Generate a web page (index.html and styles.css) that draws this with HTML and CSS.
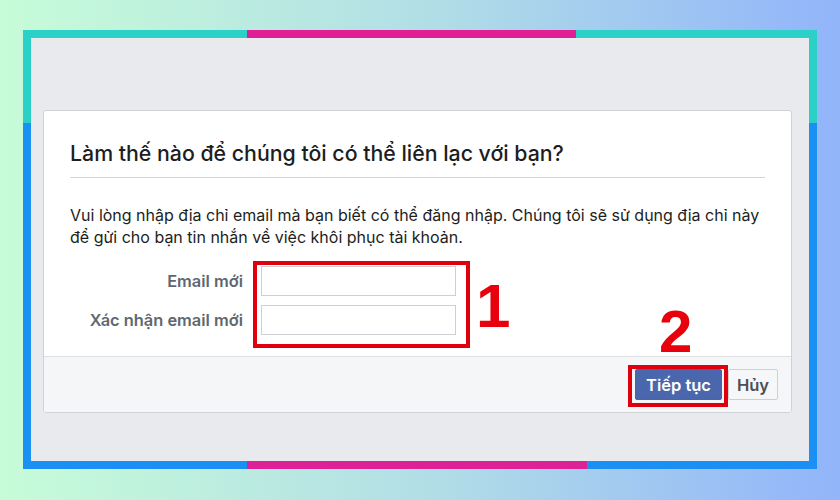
FILE: index.html
```html
<!DOCTYPE html>
<html lang="vi">
<head>
    <meta charset="UTF-8">
    <meta name="viewport" content="width=device-width, initial-scale=1.0">
    <title>Liên hệ email mới</title>
    <link rel="stylesheet" href="styles.css">
</head>
<body>
    <div class="frame">
        <div class="panel">
            <!-- Dialog card -->
            <div class="card">
                <div class="card-body">
                    <h2 class="card-title">Làm thế nào để chúng tôi có thể liên lạc với bạn?</h2>
                    <p class="card-text">Vui lòng nhập địa chỉ email mà bạn biết có thể đăng nhập. Chúng tôi sẽ sử dụng địa chỉ này để gửi cho bạn tin nhắn về việc khôi phục tài khoản.</p>

                    <div class="form">
                        <div class="form-row">
                            <label for="newEmail">Email mới</label>
                            <input type="text" id="newEmail">
                        </div>
                        <div class="form-row">
                            <label for="confirmEmail">Xác nhận email mới</label>
                            <input type="text" id="confirmEmail">
                        </div>
                    </div>
                </div>

                <div class="card-footer">
                    <button class="btn btn-primary">Tiếp tục</button>
                    <button class="btn btn-cancel">Hủy</button>
                </div>
            </div>

            <!-- Annotations -->
            <div class="mark mark-inputs"></div>
            <div class="mark mark-button"></div>
            <span class="step step-1">1</span>
            <span class="step step-2">2</span>
        </div>
    </div>
</body>
</html>
```

FILE: styles.css
```css
/* Base */
* {
    margin: 0;
    padding: 0;
    box-sizing: border-box;
}
body {
    width: 840px;
    height: 500px;
    padding-top: 30px;
    overflow: hidden;
    font-family: Inter, "Liberation Sans", Arial, sans-serif;
    background: linear-gradient(to right, #c7fcd8, #b2dfe6 50%, #92b4fa);
}

/* Coloured frame */
.frame {
    margin-left: 23px;
    width: 794px;
    height: 439px;
    padding: 8px;
    background:
        linear-gradient(to right, #2bd0c6 224px, #e01e96 224px, #e01e96 553px, #2bd0c6 553px) top / 100% 8px no-repeat,
        linear-gradient(to right, #1a90f5 224px, #dd2298 224px, #dd2298 564px, #1a90f5 564px) bottom / 100% 8px no-repeat,
        linear-gradient(to bottom, #2bd0c6 93px, #1a90f5 93px) left / 8px 100% no-repeat,
        linear-gradient(to bottom, #2bd0c6 93px, #1a90f5 93px) right / 8px 100% no-repeat;
}
.panel {
    position: relative;
    height: 100%;
    padding: 72px 17px 0 12px;
    background-color: #e9eaee;
}

/* Card */
.card {
    height: 303px;
    display: flex;
    flex-direction: column;
    background-color: #fff;
    border: 1px solid #cfd2d7;
    border-radius: 3px;
    overflow: hidden;
}
.card-body {
    flex: 1;
    padding: 30px 26px 0;
}
.card-title {
    font-size: 21.3px;
    line-height: 24px;
    font-weight: 500;
    color: #1c1e21;
    padding-bottom: 12px;
    border-bottom: 1px solid #d3d6da;
}
.card-text {
    margin-top: 26px;
    font-size: 16px;
    line-height: 22px;
    color: #1c1e21;
}

/* Form */
.form {
    margin-top: 18px;
    display: flex;
    flex-direction: column;
    gap: 9px;
}
.form-row {
    display: flex;
    align-items: center;
}
.form-row label {
    width: 173px;
    margin-right: 18px;
    text-align: right;
    font-size: 16.4px;
    font-weight: 600;
    color: #606770;
}
.form-row input {
    width: 195px;
    height: 30px;
    border: 1px solid #ccd0d5;
    background-color: #fff;
}

/* Footer */
.card-footer {
    height: 56px;
    display: flex;
    justify-content: flex-end;
    align-items: flex-start;
    gap: 6px;
    padding: 12px 13px 0 0;
    background-color: #f5f6f7;
    border-top: 1px solid #dddfe2;
}
.btn {
    height: 31px;
    border-radius: 2px;
    font-family: Inter, "Liberation Sans", Arial, sans-serif;
    font-size: 16.5px;
    font-weight: 600;
    cursor: pointer;
}
.btn-primary {
    width: 87px;
    background-color: #4a67ad;
    border: 1px solid #4267b2;
    color: #fff;
}
.btn-cancel {
    width: 50px;
    background-color: #f6f7f9;
    border: 1px solid #ced0d4;
    color: #4b4f56;
}

/* Red annotations */
.mark {
    position: absolute;
    border: 4px solid #e0000d;
}
.mark-inputs {
    left: 222px;
    top: 223px;
    width: 217px;
    height: 87px;
}
.mark-button {
    left: 597px;
    top: 327px;
    width: 100px;
    height: 42px;
}
.step {
    position: absolute;
    font-family: "Liberation Sans", Arial, sans-serif;
    font-weight: bold;
    line-height: 1;
    color: #e8000c;
}
.step-1 {
    left: 445px;
    top: 237px;
    font-size: 62px;
}
.step-2 {
    left: 628px;
    top: 264px;
    font-size: 60px;
}
```
